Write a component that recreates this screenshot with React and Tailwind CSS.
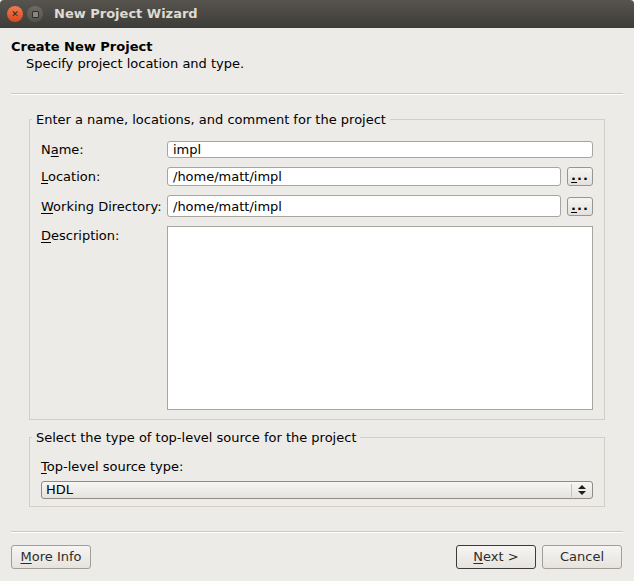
import React from 'react'

const font = { fontFamily: '"DejaVu Sans", "Liberation Sans", sans-serif' }

const U = ({ children }) => <span className="underline underline-offset-2">{children}</span>

const Field = ({ value, className }) => (
    <div className={`flex items-center rounded-[3px] border border-[#a8a49e] bg-white px-[5px] text-[13px] text-black ${className}`}>
        {value}
    </div>
)

const DotsButton = ({ className }) => (
    <button className={`flex w-[26px] items-end justify-center rounded-[3px] border border-[#9a968f] bg-gradient-to-b from-[#f6f5f3] to-[#e4e1dc] pb-[3px] text-[13px] font-bold leading-none text-black ${className}`}>
        <span className="tracking-[1px]"><U>.</U>..</span>
    </button>
)

const PushButton = ({ children, main }) => (
    <button
        className={`flex h-[24px] w-[80px] items-center justify-center rounded-[3px] border bg-gradient-to-b from-[#f6f5f3] to-[#e6e3df] text-[13px] text-[#2d2c29] ${main ? 'border-[#3c3b37]' : 'border-[#a19d97]'}`}
    >
        {children}
    </button>
)

const Separator = ({ className }) => (
    <div className={`mx-[11px] h-[2px] border-t border-b border-t-[#cbc7c1] border-b-white ${className}`} />
)

export default function App() {
    return (
        <div className="flex h-[581px] w-[634px] flex-col overflow-hidden bg-[#edebe7]" style={font}>
            {/* title bar */}
            <div className="flex h-[28px] items-center rounded-t-[4px] bg-gradient-to-b from-[#57544e] to-[#3d3c38] pl-[7px]">
                <div className="flex h-[16px] w-[16px] items-center justify-center rounded-full bg-gradient-to-b from-[#f07a50] to-[#d9461a] text-[9px] font-bold leading-none text-[#3c1d10]">
                    ✕
                </div>
                <div className="ml-[4px] flex h-[16px] w-[16px] items-center justify-center rounded-full bg-gradient-to-b from-[#6e6b65] to-[#55524d]">
                    <div className="h-[7px] w-[7px] rounded-[1px] border border-[#2f2e2b] bg-[#8a8781]" />
                </div>
                <span className="ml-[11px] text-[13px] font-bold text-[#dfdbd2]">New Project Wizard</span>
            </div>

            {/* header */}
            <div className="flex flex-col px-[11px] pt-[10px] text-[13px] leading-[17px] text-black">
                <span className="font-bold">Create New Project</span>
                <span className="pl-[15px]">Specify project location and type.</span>
            </div>

            <Separator className="mt-[21px]" />

            {/* group 1 */}
            <fieldset className="mx-[29px] mt-[16px] h-[309px] border border-[#d2cec8] px-[11px] pb-[10px] pt-[13px]">
                <legend className="ml-[-9px] px-[4px] text-[13px] leading-[17px] text-black">
                    Enter a name, locations, and comment for the project
                </legend>
                <div className="grid grid-cols-[126px_1fr] items-center gap-y-[9px] text-[13px] leading-[17px] text-black">
                    <span>N<U>a</U>me:</span>
                    <Field value="impl" className="h-[17px]" />

                    <span><U>L</U>ocation:</span>
                    <div className="flex items-center gap-[6px]">
                        <Field value="/home/matt/impl" className="h-[19px] flex-1" />
                        <DotsButton className="h-[19px]" />
                    </div>

                    <span><U>W</U>orking Directory:</span>
                    <div className="flex items-center gap-[6px]">
                        <Field value="/home/matt/impl" className="h-[22px] flex-1" />
                        <DotsButton className="h-[19px]" />
                    </div>

                    <span className="self-start pt-[1px]"><U>D</U>escription:</span>
                    <div className="h-[184px] border border-[#a8a49e] bg-white" />
                </div>
            </fieldset>

            {/* group 2 */}
            <fieldset className="mx-[29px] mt-[9px] h-[78px] border border-[#d2cec8] px-[11px] pt-[12px]">
                <legend className="ml-[-9px] px-[4px] text-[13px] leading-[17px] text-black">
                    Select the type of top-level source for the project
                </legend>
                <div className="flex flex-col text-[13px] text-black">
                    <span className="leading-[17px]"><U>T</U>op-level source type:</span>
                    <div className="mt-[6px] flex h-[18px] items-center rounded-[3px] border border-[#8f8b85] bg-gradient-to-b from-[#f7f6f4] to-[#e6e3de]">
                        <span className="flex-1 pl-[4px]">HDL</span>
                        <div className="h-[13px] border-l border-[#c5c1bb]" />
                        <svg width="20" height="14" viewBox="0 0 20 14">
                            <path d="M6 6 L10 2 L14 6 Z" fill="#1f1f1f" />
                            <path d="M6 8 L10 12 L14 8 Z" fill="#1f1f1f" />
                        </svg>
                    </div>
                </div>
            </fieldset>

            <Separator className="mt-[24px]" />

            {/* footer */}
            <div className="mt-[12px] flex items-center px-[11px]">
                <PushButton><U>M</U>ore Info</PushButton>
                <div className="flex-1" />
                <div className="flex gap-[6px] pr-[1px]">
                    <PushButton main><U>N</U>ext &gt;</PushButton>
                    <PushButton>Cancel</PushButton>
                </div>
            </div>
        </div>
    )
}
